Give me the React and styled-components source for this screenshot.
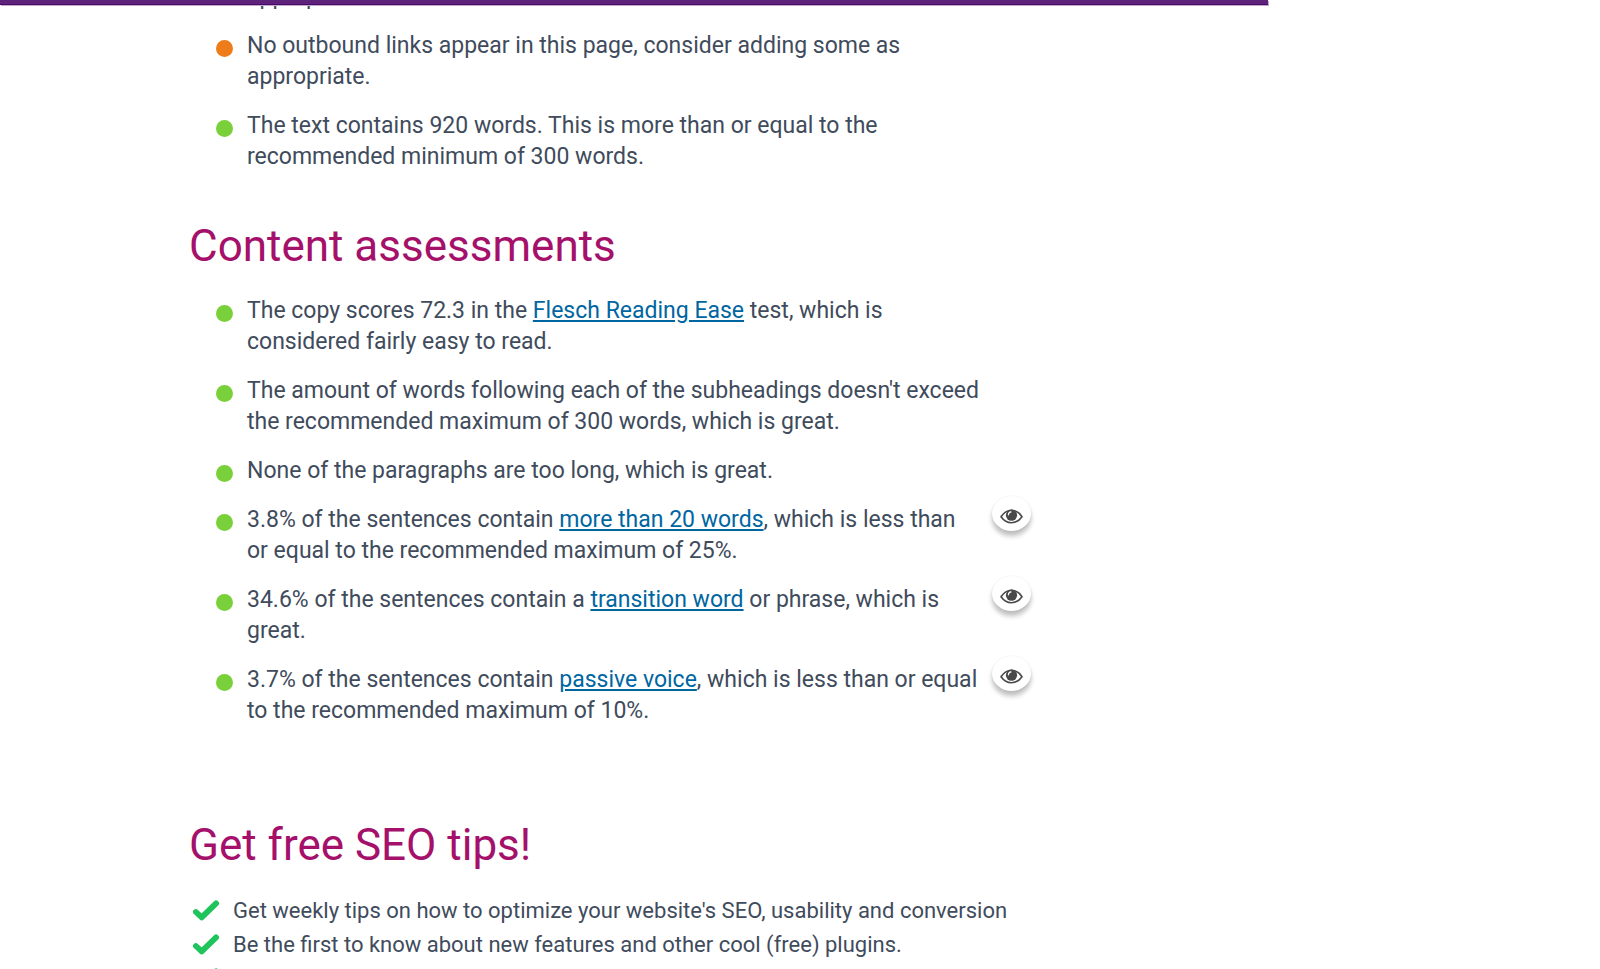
import React from 'react';
import styled, { createGlobalStyle } from 'styled-components';

const GlobalStyle = createGlobalStyle`
  * {
    box-sizing: border-box;
  }

  body {
    margin: 0;
    background-color: #fff;
    color: #404b5c;
    font-family: Roboto, 'Liberation Sans', sans-serif;
  }
`;

const Page = styled.div`
  height: 100vh;
  overflow: hidden;
`;

const TopBar = styled.header`
  position: fixed;
  top: 0;
  left: 0;
  z-index: 1;
  width: 100%;
  max-width: 1268px;
  height: 5px;
  background-color: #5d237a;
  border-bottom: 1px solid #4b0866;
  box-shadow: 1px 1px 0 #c3a9cf;
`;

const Content = styled.main`
  max-width: 1269px;
  margin-top: -19px;
  padding-left: 189px;
`;

const Section = styled.section`
  margin-top: ${(props) => props.$space || 0}px;
`;

const Heading = styled.h2`
  margin: 0 0 22px;
  color: #a4106a;
  font-size: 44px;
  font-weight: 400;
  line-height: 54px;
`;

const AssessmentList = styled.ul`
  display: flex;
  flex-direction: column;
  gap: 18px;
  margin: 0;
  padding: 0 0 0 27px;
  list-style: none;
`;

const AssessmentItem = styled.li`
  display: grid;
  grid-template-columns: 17px minmax(0, 739px) 39px;
  column-gap: 10px;
  align-items: start;
`;

const scoreColors = {
  good: '#7ad03a',
  ok: '#ee7c1b',
};

const Score = styled.span`
  width: 17px;
  height: 17px;
  margin-top: 10px;
  border-radius: 50%;
  background-color: ${(props) => scoreColors[props.$score] || 'transparent'};
`;

const AssessmentText = styled.p`
  margin: 0;
  padding-left: 4px;
  font-size: 23px;
  line-height: 31px;
`;

const Link = styled.a`
  color: #0066a2;
  text-decoration: underline;
`;

const MarkButton = styled.button`
  display: flex;
  align-items: center;
  justify-content: center;
  width: 39px;
  height: 35px;
  margin-top: -8px;
  padding: 6px 0 0;
  border: none;
  border-radius: 50%;
  background-color: #fff;
  box-shadow: 0 0 2px rgba(0, 0, 0, 0.08), 0 5px 5px rgba(0, 0, 0, 0.26);
  color: #4a4a4a;
  cursor: pointer;
`;

const TipList = styled.ul`
  margin: 0;
  padding: 0 0 0 4px;
  list-style: none;
`;

const Tip = styled.li`
  display: flex;
  align-items: center;
  gap: 14px;
  min-height: 34px;
  font-size: 22px;
  line-height: 34px;
`;

function EyeIcon() {
  return (
    <svg width="23" height="15" viewBox="0 0 23 15" fill="none" aria-hidden="true">
      <path
        d="M1 7.8C4 3.2 7.5 1.2 11.5 1.2S19 3.2 22 7.8C19 12 15.5 13.8 11.5 13.8S4 12 1 7.8Z"
        stroke="currentColor"
        strokeWidth="1.6"
        strokeLinejoin="round"
      />
      <circle cx="11.5" cy="6.2" r="5.6" fill="currentColor" />
      <path d="M8.4 5.8C8.5 4.2 9.5 3.1 11 2.9" stroke="#fff" strokeWidth="1.2" strokeLinecap="round" />
    </svg>
  );
}

function CheckIcon() {
  return (
    <svg width="26" height="22" viewBox="0 0 26 22" fill="none" aria-hidden="true">
      <path
        d="M2.9 12L8.7 17.4L23.1 3.4"
        stroke="#1fc45c"
        strokeWidth="5.8"
        strokeLinecap="round"
        strokeLinejoin="round"
      />
    </svg>
  );
}

function Assessment({ score, markable, children }) {
  return (
    <AssessmentItem>
      <Score $score={score} />
      <AssessmentText>{children}</AssessmentText>
      {markable && (
        <MarkButton type="button" aria-label="Highlight this result in the text">
          <EyeIcon />
        </MarkButton>
      )}
    </AssessmentItem>
  );
}

const tips = [
  "Get weekly tips on how to optimize your website's SEO, usability and conversion",
  'Be the first to know about new features and other cool (free) plugins.',
  '',
];

function App() {
  return (
    <Page>
      <GlobalStyle />
      <TopBar />
      <Content>
        <Section>
          <AssessmentList>
            <Assessment>appropriate.</Assessment>
            <Assessment score="ok">
              No outbound links appear in this page, consider adding some as appropriate.
            </Assessment>
            <Assessment score="good">
              The text contains 920 words. This is more than or equal to the recommended minimum of
              300 words.
            </Assessment>
          </AssessmentList>
        </Section>

        <Section $space={47}>
          <Heading>Content assessments</Heading>
          <AssessmentList>
            <Assessment score="good">
              The copy scores 72.3 in the <Link href="#flesch">Flesch Reading Ease</Link> test,
              which is considered fairly easy to read.
            </Assessment>
            <Assessment score="good">
              The amount of words following each of the subheadings doesn't exceed the recommended
              maximum of 300 words, which is great.
            </Assessment>
            <Assessment score="good">None of the paragraphs are too long, which is great.</Assessment>
            <Assessment score="good" markable>
              3.8% of the sentences contain <Link href="#length">more than 20 words</Link>, which is
              less than or equal to the recommended maximum of 25%.
            </Assessment>
            <Assessment score="good" markable>
              34.6% of the sentences contain a <Link href="#transition">transition word</Link> or
              phrase, which is great.
            </Assessment>
            <Assessment score="good" markable>
              3.7% of the sentences contain <Link href="#passive">passive voice</Link>, which is
              less than or equal to the recommended maximum of 10%.
            </Assessment>
          </AssessmentList>
        </Section>

        <Section $space={92}>
          <Heading>Get free SEO tips!</Heading>
          <TipList>
            {tips.map((tip) => (
              <Tip key={tip}>
                <CheckIcon />
                {tip}
              </Tip>
            ))}
          </TipList>
        </Section>
      </Content>
    </Page>
  );
}

export default App;
